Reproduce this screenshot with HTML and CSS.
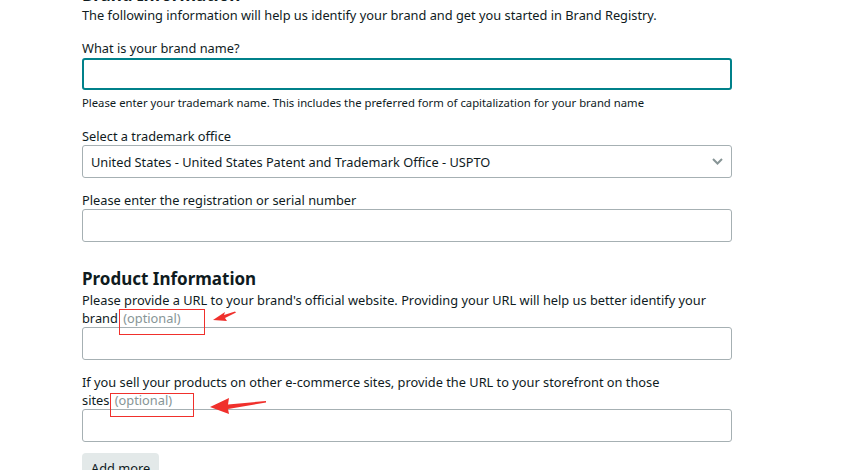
FILE: index.html
```html
<!DOCTYPE html>
<html lang="en">
<head>
  <meta charset="UTF-8" />
  <title>Brand Registry - Enroll a brand</title>
  <link rel="stylesheet" href="styles.css">
</head>
<body>
  <div class="page">
    <form class="enroll">
      <h2 class="section-title">Brand Information</h2>
      <p class="intro">The following information will help us identify your brand and get you started in Brand Registry.</p>

      <div class="field first">
        <label for="brandName">What is your brand name?</label>
        <input id="brandName" type="text" class="focused">
        <p class="hint">Please enter your trademark name. This includes the preferred form of capitalization for your brand name</p>
      </div>

      <div class="field after-hint">
        <label for="office">Select a trademark office</label>
        <div class="select">
          <span>United States - United States Patent and Trademark Office - USPTO</span>
          <svg width="11" height="7" viewBox="0 0 11 7"><path d="M1 1l4.5 4.5L10 1" fill="none" stroke="#879596" stroke-width="2"/></svg>
        </div>
      </div>

      <div class="field">
        <label for="serial">Please enter the registration or serial number</label>
        <input id="serial" type="text">
      </div>

      <h2 class="section-title product">Product Information</h2>
      <div class="field tight">
        <label for="website">Please provide a URL to your brand's official website. Providing your URL will help us better identify your brand&nbsp;<span class="optional">(optional)</span></label>
        <input id="website" type="text">
      </div>

      <div class="field">
        <label for="store">If you sell your products on other e-commerce sites, provide the URL to your storefront on those sites&nbsp;<span class="optional">(optional)</span></label>
        <input id="store" type="text">
      </div>

      <button type="button" class="add-more">Add more</button>
    </form>

    <!-- red markup drawn on the screenshot -->
    <svg class="marks" width="864" height="470" viewBox="0 0 864 470">
      <rect x="119.5" y="309.5" width="85" height="25" fill="none" stroke="#f0302c" stroke-width="1"/>
      <rect x="110.5" y="393.5" width="83" height="23" fill="none" stroke="#f0302c" stroke-width="1"/>
      <path d="M235 311.5 L224 315 L225 312 L213 320 L227 321 L225 318 L236 312.5 Z" fill="#f0302c"/>
      <path d="M266 401 L228 404.5 L229 398 L210 407 L229 414 L228 409 L266 402.5 Z" fill="#f0302c"/>
    </svg>
  </div>
</body>
</html>
```

FILE: styles.css
```css
body {
  margin: 0;
  background: #fff;
  font-family: "Noto Sans", "Open Sans", sans-serif;
  color: #0f1b1e;
  overflow: hidden;
}
.page {
  position: relative;
  display: flow-root;
  height: 470px;
}
.enroll {
  width: 650px;
  margin: -16px 0 0 82px;
}
.section-title {
  font-size: 17px;
  line-height: 22px;
  font-weight: 700;
  margin: 0;
  color: #0f1b1e;
}
.section-title.product {
  margin-top: 26px;
}
.intro {
  font-size: 12.8px;
  line-height: 18px;
  margin: 0;
}
.field {
  margin-top: 11px;
}
.field.first {
  margin-top: 13px;
}
.field.after-hint {
  margin-top: 14px;
}
.field.tight {
  margin-top: 0;
}
label {
  display: block;
  font-size: 12.8px;
  line-height: 18px;
  padding-top: 2px;
  margin-bottom: 0;
}
.section-title + .field label {
  padding-top: 1px;
}
.optional {
  color: #879596;
  margin-left: 2px;
}
input {
  display: block;
  box-sizing: border-box;
  width: 100%;
  height: 33px;
  border: 1px solid #a6b0b3;
  border-radius: 3px;
  margin: 0;
  padding: 0 8px;
  font: inherit;
}
input.focused {
  height: 32px;
  margin-top: 1px;
  border: 2px solid #00818a;
}
.hint {
  font-size: 11.3px;
  line-height: 16px;
  margin: 5px 0 0;
}
.select {
  box-sizing: border-box;
  height: 33px;
  border: 1px solid #a6b0b3;
  border-radius: 3px;
  display: flex;
  align-items: center;
  justify-content: space-between;
  padding: 0 8px 0 8px;
  font-size: 12.8px;
}
.add-more {
  margin-top: 11px;
  background: #e3e9e9;
  border: none;
  border-radius: 4px;
  height: 30px;
  padding: 0 9px;
  font: inherit;
  font-size: 12.8px;
  color: #0f1b1e;
  display: flex;
  align-items: center;
}
.marks {
  position: absolute;
  left: 0;
  top: 0;
  pointer-events: none;
}
```
